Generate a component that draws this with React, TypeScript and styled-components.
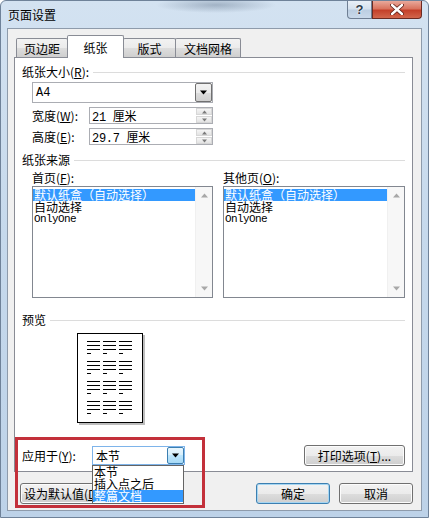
import React from "react";
import styled, { createGlobalStyle } from "styled-components";

const GlobalStyle = createGlobalStyle`
  html, body { margin: 0; padding: 0; }
  body {
    width: 429px;
    height: 518px;
    overflow: hidden;
    font-family: "Noto Sans CJK SC", "Noto Sans", sans-serif;
    font-size: 12px;
    color: #000;
  }
`;

const Window = styled.div`
  position: relative;
  width: 429px;
  height: 518px;
  box-sizing: border-box;
  display: flex;
  flex-direction: column;
  border: 1px solid #6f8299;
  border-radius: 6px 6px 0 0;
  background:
    radial-gradient(ellipse 60px 8px at 215px 4px, rgba(70, 90, 115, 0.35), transparent),
    linear-gradient(180deg, #d3e2f1 0%, #c6d9ec 45%, #bdd2e8 100%);
`;

const TitleBar = styled.div`
  height: 27px;
  display: flex;
  align-items: flex-start;
`;

const Title = styled.div`
  height: 27px;
  display: flex;
  align-items: center;
  padding-left: 7px;
  line-height: 12px;
`;

const CaptionButtons = styled.div`
  margin-left: auto;
  margin-right: 6px;
  display: flex;
`;

const CaptionButton = styled.div<{ $close?: boolean }>`
  height: 18px;
  width: ${(p) => (p.$close ? "50px" : "25px")};
  box-sizing: border-box;
  display: flex;
  align-items: center;
  justify-content: center;
  border: 1px solid ${(p) => (p.$close ? "#6b2a22" : "#6f7f94")};
  border-top: none;
  border-radius: ${(p) => (p.$close ? "0 0 4px 0" : "0 0 0 4px")};
  background: ${(p) =>
    p.$close
      ? "linear-gradient(180deg, #e9a99b 0%, #d9745f 45%, #c4402a 55%, #d2664c 100%)"
      : "linear-gradient(180deg, #e8eff7 0%, #d5e1ee 45%, #bccee2 55%, #c9d9ea 100%)"};
  color: #2e3a4a;
  font-family: "Liberation Sans", sans-serif;
  font-weight: bold;
  font-size: 13px;
  text-shadow: 0 0 2px #fff, 0 0 1px #fff;
`;

const Client = styled.div`
  flex: 1;
  margin: 0 6px 6px 6px;
  border: 1px solid #8e9bab;
  background: #f0f0f0;
  padding: 6px 8px 0 6px;
  display: flex;
  flex-direction: column;
`;

const TabRow = styled.div`
  height: 22px;
  display: flex;
  align-items: flex-end;
  padding-left: 2px;
  position: relative;
  z-index: 1;
`;

const Tab = styled.div<{ $active?: boolean; $w: number }>`
  width: ${(p) => p.$w}px;
  height: ${(p) => (p.$active ? "23px" : "19px")};
  margin-bottom: ${(p) => (p.$active ? "-1px" : "0")};
  margin-right: -1px;
  box-sizing: border-box;
  border: 1px solid #898c95;
  border-bottom: none;
  border-radius: 2px 2px 0 0;
  background: ${(p) =>
    p.$active ? "#fff" : "linear-gradient(180deg, #f2f2f2 0%, #ebebeb 50%, #dddddd 51%, #cfcfcf 100%)"};
  position: relative;
  z-index: ${(p) => (p.$active ? 2 : 1)};
  display: flex;
  align-items: center;
  justify-content: center;
  font-size: 12px;
`;

const Panel = styled.div`
  height: 415px;
  box-sizing: border-box;
  border: 1px solid #898c95;
  background: #fff;
  padding: 7px 7px 0 7px;
  display: flex;
  flex-direction: column;
`;

const SectionHeader = styled.div<{ $mt?: number }>`
  height: 14px;
  margin-top: ${(p) => p.$mt ?? 0}px;
  display: flex;
  align-items: center;
  gap: 4px;
  white-space: nowrap;
  line-height: 14px;
`;

const Rule = styled.div`
  flex: 1;
  height: 1px;
  background: #dcdcdc;
`;

const Mono = styled.span`
  font-family: "Liberation Mono", "Noto Sans CJK SC", monospace;
`;

const Select = styled.div`
  margin: 3px 0 0 10px;
  width: 181px;
  height: 21px;
  box-sizing: border-box;
  border: 1px solid #abadb3;
  display: flex;
  align-items: stretch;
  background: #fff;
`;

const SelectText = styled.div`
  flex: 1;
  display: flex;
  align-items: center;
  padding-left: 3px;
  font-family: "Liberation Mono", "Noto Sans CJK SC", monospace;
  font-size: 12px;
`;

const DropButton = styled.div<{ $hot?: boolean }>`
  width: 17px;
  box-sizing: border-box;
  border: 1px solid ${(p) => (p.$hot ? "#3c7fb1" : "#707070")};
  border-radius: 2px;
  display: flex;
  align-items: center;
  justify-content: center;
  background: ${(p) =>
    p.$hot
      ? "linear-gradient(180deg, #eaf6fd 0%, #d9f0fc 45%, #bee6fd 50%, #a7d9f5 100%)"
      : "linear-gradient(180deg, #f2f2f2 0%, #ebebeb 50%, #dddddd 51%, #cfcfcf 100%)"};
`;

const FieldRow = styled.div`
  margin: 4px 0 0 10px;
  height: 17px;
  display: flex;
  align-items: center;
`;

const FieldLabel = styled.div<{ $w: number }>`
  width: ${(p) => p.$w}px;
  white-space: nowrap;
`;

const Spin = styled.div`
  width: 124px;
  height: 17px;
  box-sizing: border-box;
  border: 1px solid #abadb3;
  display: flex;
`;

const SpinText = styled.div`
  flex: 1;
  display: flex;
  align-items: center;
  padding-left: 2px;
  font-family: "Liberation Mono", "Noto Sans CJK SC", monospace;
  font-size: 12px;
  letter-spacing: -0.3px;
`;

const SpinButtons = styled.div`
  width: 16px;
  display: flex;
  flex-direction: column;
  gap: 1px;
`;

const SpinHalf = styled.div`
  flex: 1;
  display: flex;
  align-items: center;
  justify-content: center;
  border: 1px solid #d7d7d7;
  background: linear-gradient(180deg, #f5f5f5, #e3e3e3);
`;

const Columns = styled.div`
  margin: 4px 0 0 10px;
  display: flex;
  gap: 10px;
`;

const Column = styled.div<{ $w: number }>`
  width: ${(p) => p.$w}px;
  display: flex;
  flex-direction: column;
`;

const ColumnLabel = styled.div`
  height: 14px;
  line-height: 14px;
  white-space: nowrap;
`;

const ListBox = styled.div`
  margin-top: 1px;
  height: 112px;
  box-sizing: border-box;
  border: 1px solid #828790;
  display: flex;
  background: #fff;
`;

const ListItems = styled.div`
  flex: 1;
  padding-top: 2px;
`;

const ListItem = styled.div<{ $selected?: boolean; $mono?: boolean }>`
  height: 12px;
  line-height: 12px;
  padding-left: 1px;
  white-space: nowrap;
  font-size: ${(p) => (p.$mono ? "11px" : "12px")};
  letter-spacing: ${(p) => (p.$mono ? "-0.6px" : "0")};
  font-family: ${(p) =>
    p.$mono ? `"Liberation Mono", monospace` : `"Noto Sans CJK SC", sans-serif`};
  background: ${(p) => (p.$selected ? "#3399ff" : "transparent")};
  color: ${(p) => (p.$selected ? "#fff" : "#000")};
`;

const ScrollBar = styled.div`
  width: 16px;
  display: flex;
  flex-direction: column;
  justify-content: space-between;
  align-items: center;
  background: #f7f7f7;
  border-left: 1px solid #f0f0f0;
  padding: 6px 0;
`;

const PreviewBox = styled.div`
  margin: 6px 0 0 55px;
  width: 68px;
  height: 92px;
`;

const ApplyRow = styled.div`
  margin-top: 20px;
  height: 21px;
  display: flex;
  align-items: center;
`;

const ComboWrap = styled.div`
  position: relative;
  z-index: 10;
`;

const Combo = styled.div`
  width: 93px;
  height: 19px;
  box-sizing: border-box;
  border: 1px solid #7eb4ea;
  display: flex;
  background: #fff;
`;

const ComboText = styled.div`
  flex: 1;
  display: flex;
  align-items: center;
  padding-left: 3px;
`;

const DropList = styled.div`
  position: absolute;
  top: 100%;
  left: 0;
  width: 92px;
  box-sizing: border-box;
  border: 1px solid #646464;
  background: #fff;
  padding-bottom: 1px;
`;

const DropItem = styled.div<{ $selected?: boolean }>`
  height: 12px;
  line-height: 12px;
  padding-left: 1px;
  white-space: nowrap;
  background: ${(p) => (p.$selected ? "#3399ff" : "transparent")};
  color: ${(p) => (p.$selected ? "#fff" : "#000")};
`;

const Button = styled.div<{ $w: number; $default?: boolean; $ml?: string; $left?: boolean }>`
  width: ${(p) => p.$w}px;
  height: 21px;
  margin-left: ${(p) => p.$ml ?? "0"};
  box-sizing: border-box;
  border: 1px solid ${(p) => (p.$default ? "#3c7fb1" : "#707070")};
  border-radius: 3px;
  box-shadow: ${(p) => (p.$default ? "inset 0 0 0 1px #a6d6f2" : "inset 0 0 0 1px #fcfcfc")};
  background: linear-gradient(180deg, #f2f2f2 0%, #ebebeb 50%, #dddddd 51%, #cfcfcf 100%);
  display: flex;
  align-items: center;
  justify-content: ${(p) => (p.$left ? "flex-start" : "center")};
  padding-left: ${(p) => (p.$left ? "3px" : "0")};
  white-space: nowrap;
`;

const Footer = styled.div`
  margin-top: 11px;
  padding-left: 6px;
  height: 21px;
  display: flex;
  align-items: center;
`;

const Highlight = styled.div`
  position: absolute;
  left: 14px;
  top: 436px;
  width: 190px;
  height: 71px;
  box-sizing: border-box;
  border: 3px solid #c3303a;
  pointer-events: none;
  z-index: 20;
`;

const Tri = ({ up, color = "#000", size = 7 }: { up?: boolean; color?: string; size?: number }) => (
  <svg width={size} height={Math.ceil(size / 2) + 1} viewBox="0 0 7 4">
    {up ? <polygon points="0,4 7,4 3.5,0" fill={color} /> : <polygon points="0,0 7,0 3.5,4" fill={color} />}
  </svg>
);

const CloseGlyph = () => (
  <svg width="14" height="11" viewBox="0 0 14 11">
    <path d="M2 1 L12 10 M12 1 L2 10" stroke="#5a1a12" strokeWidth="4" strokeLinecap="round" />
    <path d="M2 1 L12 10 M12 1 L2 10" stroke="#fff" strokeWidth="2.4" strokeLinecap="round" />
  </svg>
);

const PreviewPage = () => {
  const cols = [10, 26, 42];
  const groups = [8, 28, 48, 68];
  return (
    <svg width="68" height="92" viewBox="0 0 68 92">
      <rect x="2" y="2" width="66" height="90" fill="#bdbdbd" />
      <rect x="0.5" y="0.5" width="65" height="89" fill="#fff" stroke="#000" />
      {groups.map((g) =>
        cols.map((c) => (
          <g key={`${g}-${c}`} stroke="#000" strokeWidth="1">
            <line x1={c} y1={g + 0.5} x2={c + 13} y2={g + 0.5} />
            <line x1={c} y1={g + 4.5} x2={c + 13} y2={g + 4.5} />
            <line x1={c} y1={g + 8.5} x2={c + 13} y2={g + 8.5} />
            <line x1={c} y1={g + 12.5} x2={c + 4} y2={g + 12.5} />
          </g>
        ))
      )}
    </svg>
  );
};

const SourceList = () => (
  <ListBox>
    <ListItems>
      <ListItem $selected>默认纸盒（自动选择）</ListItem>
      <ListItem>自动选择</ListItem>
      <ListItem $mono>OnlyOne</ListItem>
    </ListItems>
    <ScrollBar>
      <Tri up color="#a8a8a8" />
      <Tri color="#a8a8a8" />
    </ScrollBar>
  </ListBox>
);

export default function App() {
  return (
    <>
      <GlobalStyle />
      <Window>
        <TitleBar>
          <Title>页面设置</Title>
          <CaptionButtons>
            <CaptionButton>?</CaptionButton>
            <CaptionButton $close>
              <CloseGlyph />
            </CaptionButton>
          </CaptionButtons>
        </TitleBar>
        <Client>
          <TabRow>
            <Tab $w={52}>页边距</Tab>
            <Tab $w={57} $active>
              纸张
            </Tab>
            <Tab $w={53}>版式</Tab>
            <Tab $w={66}>文档网格</Tab>
          </TabRow>
          <Panel>
            <SectionHeader>
              <span>
                纸张大小(<u>R</u>):
              </span>
              <Rule />
            </SectionHeader>
            <Select>
              <SelectText>A4</SelectText>
              <DropButton>
                <Tri />
              </DropButton>
            </Select>
            <FieldRow>
              <FieldLabel $w={57}>
                宽度(<u>W</u>):
              </FieldLabel>
              <Spin>
                <SpinText>
                  <Mono>21 厘米</Mono>
                </SpinText>
                <SpinButtons>
                  <SpinHalf>
                    <Tri up size={5} color="#7a7a7a" />
                  </SpinHalf>
                  <SpinHalf>
                    <Tri size={5} color="#7a7a7a" />
                  </SpinHalf>
                </SpinButtons>
              </Spin>
            </FieldRow>
            <FieldRow>
              <FieldLabel $w={57}>
                高度(<u>E</u>):
              </FieldLabel>
              <Spin>
                <SpinText>
                  <Mono>29.7 厘米</Mono>
                </SpinText>
                <SpinButtons>
                  <SpinHalf>
                    <Tri up size={5} color="#7a7a7a" />
                  </SpinHalf>
                  <SpinHalf>
                    <Tri size={5} color="#7a7a7a" />
                  </SpinHalf>
                </SpinButtons>
              </Spin>
            </FieldRow>
            <SectionHeader $mt={8}>
              <span>纸张来源</span>
              <Rule />
            </SectionHeader>
            <Columns>
              <Column $w={181}>
                <ColumnLabel>
                  首页(<u>F</u>):
                </ColumnLabel>
                <SourceList />
              </Column>
              <Column $w={182}>
                <ColumnLabel>
                  其他页(<u>O</u>):
                </ColumnLabel>
                <SourceList />
              </Column>
            </Columns>
            <SectionHeader $mt={15}>
              <span>预览</span>
              <Rule />
            </SectionHeader>
            <PreviewBox>
              <PreviewPage />
            </PreviewBox>
            <ApplyRow>
              <FieldLabel $w={70}>
                应用于(<u>Y</u>):
              </FieldLabel>
              <ComboWrap>
                <Combo>
                  <ComboText>本节</ComboText>
                  <DropButton $hot>
                    <Tri />
                  </DropButton>
                </Combo>
                <DropList>
                  <DropItem>本节</DropItem>
                  <DropItem>插入点之后</DropItem>
                  <DropItem $selected>整篇文档</DropItem>
                </DropList>
              </ComboWrap>
              <Button $w={101} $ml="auto">
                打印选项(<u>T</u>)...
              </Button>
            </ApplyRow>
          </Panel>
          <Footer>
            <Button $w={96} $left>
              设为默认值(<u>D</u>)...
            </Button>
            <Button $w={74} $default $ml="auto">
              确定
            </Button>
            <Button $w={74} $ml="9px">
              取消
            </Button>
          </Footer>
        </Client>
        <Highlight />
      </Window>
    </>
  );
}
